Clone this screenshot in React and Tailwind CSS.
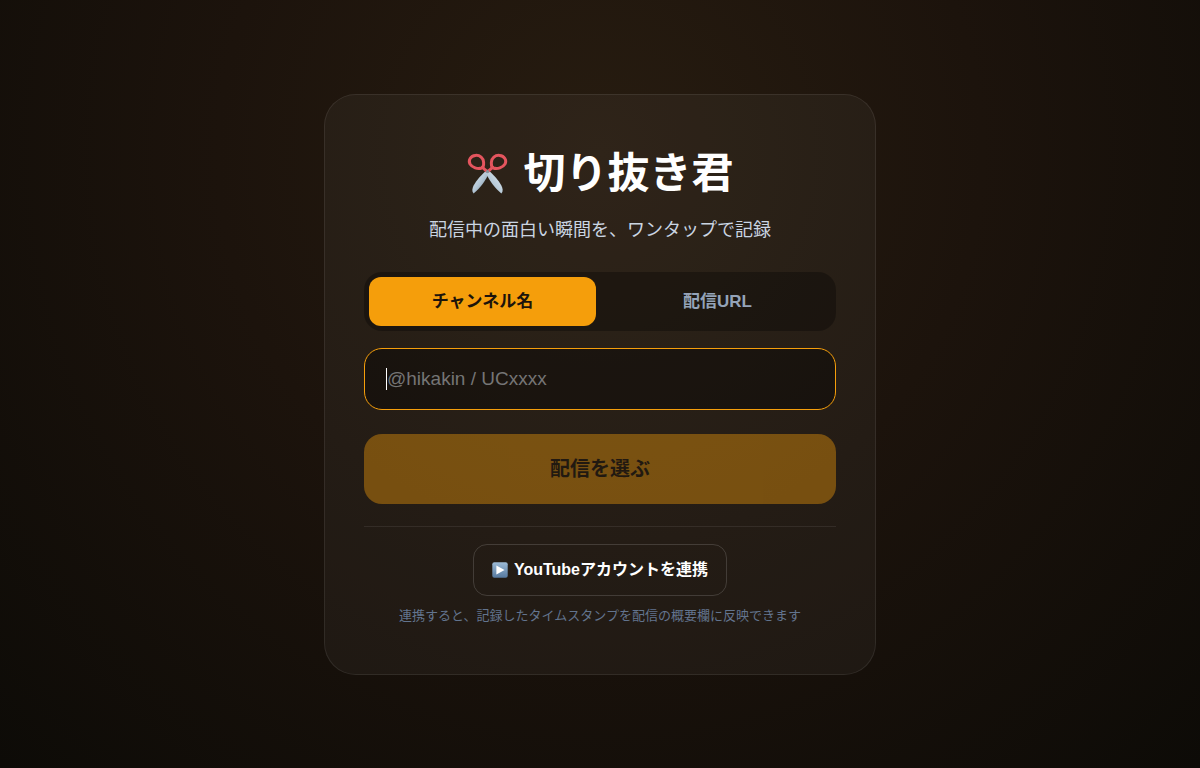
import { useState } from 'react';

const tabs = [
  { id: 'channel', label: 'チャンネル名', placeholder: '@hikakin / UCxxxx' },
  { id: 'url', label: '配信URL', placeholder: 'https://youtube.com/watch?v=...' },
];

function ScissorsIcon() {
  return (
    <svg className="h-[42px] w-[42px] shrink-0" viewBox="0 0 42 42" aria-hidden="true">
      <defs>
        <linearGradient id="bladeLeft" x1="0" y1="0" x2="1" y2="1">
          <stop offset="0" stopColor="#e3eef6" />
          <stop offset="0.5" stopColor="#b3c6d5" />
          <stop offset="1" stopColor="#61788b" />
        </linearGradient>
        <linearGradient id="bladeRight" x1="1" y1="0" x2="0" y2="1">
          <stop offset="0" stopColor="#e3eef6" />
          <stop offset="0.6" stopColor="#b4c7d5" />
          <stop offset="1" stopColor="#7890a3" />
        </linearGradient>
      </defs>
      <path d="M20.6 17 L23.2 20.2 C19.6 27 14.5 35 7.6 40.4 C5.6 38 6.2 35.4 7.6 32.4 C10.4 27.4 15.6 21.6 20.6 17 Z" fill="url(#bladeLeft)" />
      <path d="M22.4 17 L19.8 20.2 C23.4 27 28.5 35 35.4 40.4 C37.4 38 36.8 35.4 35.4 32.4 C32.6 27.4 27.4 21.6 22.4 17 Z" fill="url(#bladeRight)" />
      <g fill="none" stroke="#e4555e" strokeWidth="3" strokeLinejoin="round" strokeLinecap="round">
        <path d="M9.4 2.4 C14 2 17.4 5.2 17.6 9.2 C17.8 12 17.6 14.2 15.6 15 C11.6 16.4 6.2 14.6 4 11 C2 7.2 4.6 2.8 9.4 2.4 Z" />
        <path d="M33.6 2.4 C29 2 25.6 5.2 25.4 9.2 C25.2 12 25.4 14.2 27.4 15 C31.4 16.4 36.8 14.6 39 11 C41 7.2 38.4 2.8 33.6 2.4 Z" />
        <path d="M16.4 14.2 C17.6 15.4 19 16.8 20.6 18 M26.6 14.2 C25.4 15.4 24 16.8 22.4 18" />
      </g>
      <circle cx="21.5" cy="18.6" r="1.6" fill="#84929b" />
    </svg>
  );
}

function PlayIcon() {
  return (
    <svg className="h-4 w-4 shrink-0" viewBox="0 0 16 16" aria-hidden="true">
      <defs>
        <linearGradient id="playTile" x1="0" y1="0" x2="0" y2="1">
          <stop offset="0" stopColor="#9dbbd6" />
          <stop offset="1" stopColor="#56799f" />
        </linearGradient>
      </defs>
      <rect x="0.3" y="0.3" width="15.4" height="15.4" rx="2" fill="url(#playTile)" />
      <path d="M4.4 3.6 L12.6 8 L4.4 12.4 Z" fill="#fff" />
    </svg>
  );
}

export default function App() {
  const [mode, setMode] = useState('channel');
  const [query, setQuery] = useState('');
  const active = tabs.find((tab) => tab.id === mode);

  return (
    <main className="flex min-h-screen items-center justify-center bg-[#0d0b08] bg-[radial-gradient(ellipse_at_50%_20%,#271c10_0%,#1c130c_45%,#0d0b07_100%)] px-4 py-8 font-['Liberation_Sans','Noto_Sans_CJK_JP',sans-serif] text-white">
      <section className="w-full max-w-[552px] rounded-[32px] border border-white/8 bg-white/4 px-[39px] py-12">
        <h1 className="flex items-center justify-center gap-[15px] text-[42px] leading-[62px] font-bold">
          <ScissorsIcon />
          切り抜き君
        </h1>
        <p className="mt-[11px] text-center text-lg text-slate-300">配信中の面白い瞬間を、ワンタップで記録</p>

        <div className="mt-7 flex gap-2 rounded-[18px] bg-black/30 p-[5px]">
          {tabs.map((tab) => (
            <button
              key={tab.id}
              type="button"
              onClick={() => setMode(tab.id)}
              className={`flex-1 basis-0 rounded-xl py-3 text-[17px] leading-[25px] font-bold ${
                mode === tab.id ? 'bg-[#f59e0b] text-[#1c140b]' : 'text-[#94a3b8]'
              }`}
            >
              {tab.label}
            </button>
          ))}
        </div>

        <form onSubmit={(e) => e.preventDefault()}>
          <div className="relative mt-[17px]">
            <input
              type="text"
              aria-label={active.label}
              placeholder={active.placeholder}
              value={query}
              onChange={(e) => setQuery(e.target.value)}
              className="block w-full rounded-[18px] border border-[#f59e0b] bg-black/35 px-[22px] py-4 text-[19px] leading-7 text-white outline-none placeholder:text-[#757575]"
            />
            {!query && <span className="pointer-events-none absolute inset-y-5 left-[22px] w-px bg-white" />}
          </div>
          <button
            type="submit"
            disabled={!query}
            className="mt-6 w-full rounded-[18px] bg-[#f59e0b] py-5 text-xl leading-[30px] font-bold text-[#1c140b] disabled:opacity-40"
          >
            配信を選ぶ
          </button>
        </form>

        <div className="mt-[22px] flex flex-col items-center border-t border-white/8 pt-[17px]">
          <button
            type="button"
            className="flex items-center gap-[6px] rounded-[14px] border border-white/15 px-[18px] py-[13px] text-base leading-6 font-bold"
          >
            <PlayIcon />
            YouTubeアカウントを連携
          </button>
          <p className="mt-[10px] text-center text-[13px] leading-5 text-slate-500">
            連携すると、記録したタイムスタンプを配信の概要欄に反映できます
          </p>
        </div>
      </section>
    </main>
  );
}
